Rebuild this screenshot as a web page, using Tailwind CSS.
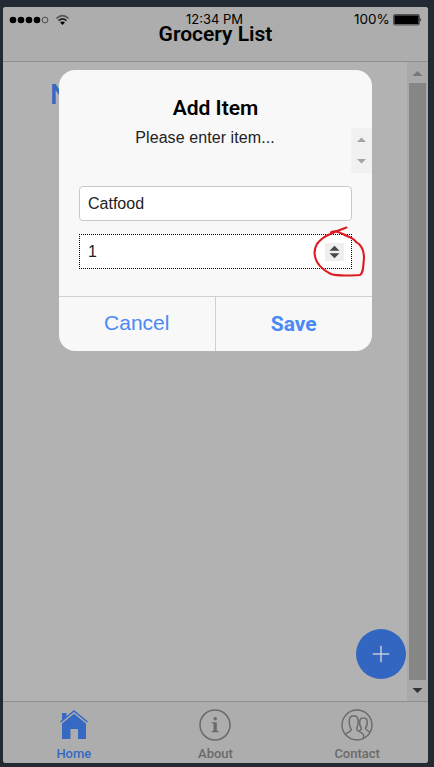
<!DOCTYPE html>
<html lang="en">
<head>
<meta charset="utf-8">
<title>Grocery List</title>
<script src="https://cdn.jsdelivr.net/npm/@tailwindcss/browser@4"></script>
</head>
<body class="h-[767px] w-[434px] overflow-hidden bg-[#222a33] pt-[7px] pl-[3px] font-['Roboto',sans-serif]">
<div class="relative flex h-[756px] w-[425px] flex-col overflow-hidden rounded-[3px] bg-[#b2b2b2]">
  <header class="h-[55px] shrink-0 border-b border-[#8e8e8e] bg-[#adadad] text-black">
    <div class="flex h-[17px] items-start pt-[4px] font-['Inter',sans-serif] text-[13px] leading-[17px]">
      <svg class="ml-[6px] mt-[2px] shrink-0" width="64" height="14" viewBox="0 0 64 14">
        <g><circle cx="4" cy="7" r="3.300"/><circle cx="12" cy="7" r="3.300"/><circle cx="20" cy="7" r="3.300"/><circle cx="28" cy="7" r="3.300"/></g>
        <circle cx="36" cy="7" r="2.900" fill="none" stroke="#333" stroke-width=".8"/>
        <g fill="none" stroke="#222" stroke-width="1.600"><path d="M47.300 5.500Q53.500 -.1 59.700 5.500" stroke="#555"/><path d="M49.500 7.700Q53.500 4.200 57.500 7.700"/></g>
        <path d="M51 9.300Q53.500 7.500 56 9.300L53.500 12Z"/>
      </svg>
      <span class="ml-[113px] w-[60px] whitespace-nowrap">12:34 PM</span>
      <span class="ml-[108px] w-[37px] whitespace-nowrap text-[13.5px]">100%</span>
      <svg class="ml-[2px] mt-[3px] shrink-0" width="29" height="12" viewBox="0 0 29 12"><rect x=".5" y=".5" width="26" height="10.500" rx="1.500" fill="#777" stroke="#555"/><rect x="1.500" y="1.500" width="24" height="8.500"/><path d="M27.200 4Q29 5.700 27.200 7.500Z"/></svg>
    </div>
    <h1 class="text-center text-[21px] font-semibold leading-[21px]">Grocery List</h1>
  </header>

  <main class="flex min-h-0 flex-1">
    <div class="flex flex-1 flex-col justify-between">
      <h2 class="ml-[47px] mt-[17px] text-[28px] font-medium leading-[31px] text-[#3569c4]">N</h2>
      <button class="mb-[22px] ml-auto mr-[1px] flex size-[50px] items-center justify-center rounded-full bg-[#3266c0]" aria-label="Add">
        <svg width="18" height="18" viewBox="0 0 18 18"><path d="M9 .8v16.400M.8 9h16.400" stroke="#c4cad6" stroke-width="1.500"/></svg>
      </button>
    </div>
    <div class="flex w-[21px] flex-col items-center bg-[#a9a9a9]">
      <svg class="shrink-0" width="21" height="21"><path d="M5.500 14L10.500 9L15.500 14Z" fill="#777"/></svg>
      <div class="mr-px w-[17px] flex-1 bg-[#868685]"></div>
      <svg class="shrink-0" width="21" height="21"><path d="M5.500 8L10.500 13L15.500 8Z" fill="#333"/></svg>
    </div>
  </main>

  <nav class="grid h-[62px] shrink-0 grid-cols-3 border-t border-[#8e8e8e] bg-[#adadad] text-[13px] font-medium leading-[16px] text-[#6a6a6a]">
    <a class="flex flex-col items-center pt-[7px] text-[#3669c3]">
      <svg width="32" height="32" viewBox="0 0 32 32"><path d="M4 4H8.500V8L4 12ZM4 14.500L16 4.800L28 14.500V30H20V20H12.500V30H4Z" fill="currentColor"/><path d="M2.500 14.300L16 3.300L29.500 14.300" fill="none" stroke="#adadad" stroke-width="1.200"/><path d="M2.500 13L16 2L29.500 13" fill="none" stroke="currentColor" stroke-width="1.600"/></svg>
      <span class="mt-[5px]">Home</span>
    </a>
    <a class="flex flex-col items-center pt-[7px]">
      <svg width="32" height="32" viewBox="0 0 32 32" fill="none"><circle cx="16" cy="16" r="15" stroke="currentColor" stroke-width="1.500"/><circle cx="16.200" cy="9.800" r="1.700" fill="currentColor"/><path d="M12.500 13.200H17.800V21.800L19.600 22.300V23.300H12.500V22.300L14.500 21.800V14.500L12.500 14.100Z" fill="currentColor"/></svg>
      <span class="mt-[5px]">About</span>
    </a>
    <a class="flex flex-col items-center pt-[7px]">
      <svg width="32" height="32" viewBox="0 0 32 32" fill="none" stroke="currentColor" stroke-width="1.400"><circle cx="16" cy="16" r="15"/><path d="M4.700 25.200C6 22.700 10.800 23 10.200 20.200C9.600 18.500 8.200 17.500 8.300 14.300C7.800 9.300 9.100 6.700 12.700 6.700S17.700 9.300 17.100 14.300C17 17.500 15.500 18.500 15.600 20.200C16 22.500 21 22.700 22.400 25.700C22.700 27 22.600 28 22.500 29.300"/><path d="M18.300 21.500C20 20.900 20.700 20.200 20.200 18.900C18.600 16.700 18.400 13.500 18.900 11.300C19.500 8 25.500 8 26 11.300C26.500 14 26 17 24.600 18.800C24.100 21.600 27.700 20.800 28.700 23.500"/></svg>
      <span class="mt-[5px]">Contact</span>
    </a>
  </nav>

  <section class="absolute left-[56px] top-[63px] flex h-[281px] w-[313px] flex-col overflow-hidden rounded-[16px] bg-[#f8f8f8] text-black" role="dialog">
    <h2 class="pt-[26px] text-center text-[21px] font-semibold leading-[24px]">Add Item</h2>
    <div class="mt-[8px] flex h-[45px]">
      <p class="flex-1 text-center font-['Liberation_Sans',sans-serif] text-[16px] leading-[20px] tracking-[0.08px] text-[#222]">Please enter item...</p>
      <svg class="shrink-0 bg-[#f1f1f1]" width="21" height="45"><path d="M6 14L10.500 9.500L15 14ZM6 31H15L10.500 35.500Z" fill="#a3a3a3"/></svg>
    </div>
    <div class="mx-[20px] mt-[13px] flex h-[35px] items-center rounded-[4px] border border-[#c8c8c8] bg-white pl-[8px] font-['Liberation_Sans',sans-serif] text-[16px] text-[#222]">Catfood</div>
    <div class="mx-[20px] mt-[13px] flex h-[35px] items-center justify-between border border-dotted border-black bg-white pl-[8px] pr-[7px] font-['Liberation_Sans',sans-serif] text-[16px] text-[#222]">
      <span>1</span>
      <svg class="bg-[#efefef]" width="19" height="18"><path d="M4.500 7.800L9.500 2.800L14.500 7.800ZM4.500 10.200H14.500L9.500 15.200Z" fill="#484848"/></svg>
    </div>
    <div class="mt-auto grid h-[55px] grid-cols-2 border-t border-[#d0d0d0] text-[21px] text-[#4a88f5]">
      <button class="border-r border-[#d0d0d0] pb-[2px] font-['Liberation_Sans',sans-serif]">Cancel</button>
      <button class="pt-[1px] font-bold">Save</button>
    </div>
  </section>
  <svg class="pointer-events-none absolute left-[307px] top-[216px]" width="65" height="66" viewBox="310 223 65 66" fill="none" stroke="#dc1c23" stroke-width="2.100" stroke-linecap="round" stroke-linejoin="round"><path d="M346.500 227.500L337 231L330.500 234C325 236 320 240 317 244C314 249 314 256 317 262C320 267 325 271 331 274C339 276.500 350 275.500 360 275C363.500 273 363 267 364 258C364 252 363 248 359 244L356 242C354 238 348 237 343 234C338 232 335 230 331 232.500"/></svg>
</div>
</body>
</html>
